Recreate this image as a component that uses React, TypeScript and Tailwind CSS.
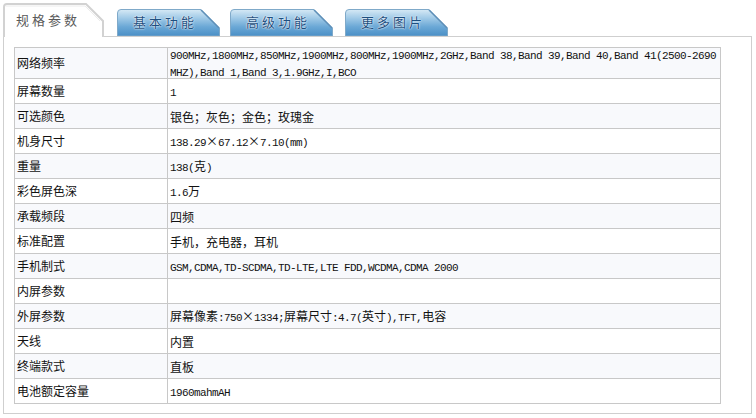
import React from "react";

const rows: { label: string; value: string | string[] }[] = [
  {
    label: "网络频率",
    value: [
      "900MHz,1800MHz,850MHz,1900MHz,800MHz,1900MHz,2GHz,Band 38,Band 39,Band 40,Band 41(2500-2690",
      "MHZ),Band 1,Band 3,1.9GHz,I,BCO",
    ],
  },
  { label: "屏幕数量", value: "1" },
  { label: "可选颜色", value: "银色；灰色；金色；玫瑰金" },
  { label: "机身尺寸", value: "138.29×67.12×7.10(mm)" },
  { label: "重量", value: "138(克)" },
  { label: "彩色屏色深", value: "1.6万" },
  { label: "承载频段", value: "四频" },
  { label: "标准配置", value: "手机，充电器，耳机" },
  { label: "手机制式", value: "GSM,CDMA,TD-SCDMA,TD-LTE,LTE FDD,WCDMA,CDMA 2000" },
  { label: "内屏参数", value: "" },
  { label: "外屏参数", value: "屏幕像素:750×1334;屏幕尺寸:4.7(英寸),TFT,电容" },
  { label: "天线", value: "内置" },
  { label: "终端款式", value: "直板" },
  { label: "电池额定容量", value: "1960mahmAH" },
];

function Rich({ text }: { text: string }) {
  const parts = text.split(/([\x20-\x7e]+)/).filter((p) => p.length > 0);
  return (
    <>
      {parts.map((p, i) =>
        /^[\x20-\x7e]+$/.test(p) ? (
          <span
            key={i}
            className="font-['Liberation_Mono',monospace] text-[11px] tracking-[-0.6px] whitespace-pre"
          >
            {p}
          </span>
        ) : (
          <span key={i} className="font-['Noto_Sans_CJK_SC',sans-serif] text-[12px]">
            {p}
          </span>
        )
      )}
    </>
  );
}

function BlueTab({ label, className }: { label: string; className: string }) {
  const id = "g" + label;
  return (
    <div className={"relative w-[103px] h-[27px] mb-px " + className}>
      <svg className="absolute inset-0" width="103" height="27" viewBox="0 0 103 27">
        <defs>
          <linearGradient id={id} x1="0" y1="0" x2="0" y2="1">
            <stop offset="0" stopColor="#d6e9f5" />
            <stop offset="0.3" stopColor="#a4cce8" />
            <stop offset="0.65" stopColor="#6ba8d6" />
            <stop offset="1" stopColor="#4a8fc6" />
          </linearGradient>
        </defs>
        <path
          d="M0.5 27 V4 Q0.5 0.5 4 0.5 H84 L102.5 19 V27 Z"
          fill={`url(#${id})`}
          stroke="#7fa9c9"
          strokeWidth="1"
        />
        <path d="M84 1 L102 19" stroke="#5f8fb8" strokeWidth="1.5" fill="none" />
      </svg>
      <div className="relative pl-[16px] pt-[5px] text-[13px] leading-[16px] tracking-[3px] text-[#1d4f80] font-['Noto_Sans_CJK_SC',sans-serif] [text-shadow:0_0_2px_#ffffff,0_0_1px_#ffffff]">
        {label}
      </div>
    </div>
  );
}

export default function App() {
  return (
    <div className="w-[756px] h-[418px] bg-white overflow-hidden text-black">
      <div className="relative z-10 flex items-end h-[37px] pl-[3px]">
        <div className="relative w-[101px] h-[34px]">
          <svg className="absolute inset-0" width="101" height="34" viewBox="0 0 101 34">
            <path d="M1 34 V4 Q1 1 4 1 H83 L100 18 V34 Z" fill="#ffffff" stroke="none" />
            <path
              d="M1 34 V4 Q1 1 4 1 H83 L100 18 V34"
              fill="none"
              stroke="#d2d2d2"
              strokeWidth="2"
            />
            <path d="M3 3 H82 L97 18" fill="none" stroke="#ececec" strokeWidth="1" />
          </svg>
          <div className="relative pl-[13px] pt-[9px] text-[13px] leading-[16px] tracking-[3px] text-[#5a5a5a] font-['Noto_Sans_CJK_SC',sans-serif]">
            规格参数
          </div>
        </div>
        <BlueTab label="基本功能" className="ml-[13px]" />
        <BlueTab label="高级功能" className="ml-[10px]" />
        <BlueTab label="更多图片" className="ml-[12px]" />
      </div>
      <div className="-mt-px ml-[3px] w-[749px] h-[378px] border border-[#cfcfcf] pt-[10px] pl-[10px]">
        <div className="w-[707px] border-l border-t border-r border-[#c8c8c8]">
          {rows.map((r, i) => (
            <div
              key={r.label}
              className={
                "flex border-b border-[#c8c8c8] " +
                (i === 0 ? "h-[31px] " : "h-[25px] ") +
                (i % 2 === 0 ? "bg-[#f8f9fc]" : "bg-white")
              }
            >
              <div className="w-[153px] shrink-0 border-r border-[#c8c8c8] flex items-center pl-[2px] text-[12px] leading-[14px] text-[#111] font-['Noto_Sans_CJK_SC',sans-serif]">
                {r.label}
              </div>
              <div className="flex-1 flex flex-col justify-center pl-[2px] leading-[14px] text-[#111]">
                {Array.isArray(r.value) ? (
                  r.value.map((line, j) => (
                    <div key={j} className="whitespace-nowrap">
                      <Rich text={line} />
                    </div>
                  ))
                ) : (
                  <div className="whitespace-nowrap">
                    <Rich text={r.value} />
                  </div>
                )}
              </div>
            </div>
          ))}
        </div>
      </div>
    </div>
  );
}
